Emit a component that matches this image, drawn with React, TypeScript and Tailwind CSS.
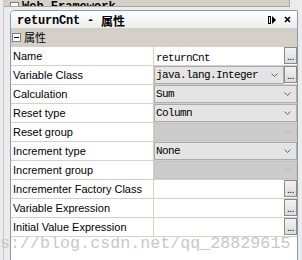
import React from 'react';

type Row = {
  label: string;
  kind: 'text' | 'combo' | 'disabled' | 'empty';
  value?: string;
  dots?: boolean;
};

const rows: Row[] = [
  { label: 'Name', kind: 'text', value: 'returnCnt', dots: true },
  { label: 'Variable Class', kind: 'combo', value: 'java.lang.Integer', dots: true },
  { label: 'Calculation', kind: 'combo', value: 'Sum' },
  { label: 'Reset type', kind: 'combo', value: 'Column' },
  { label: 'Reset group', kind: 'disabled' },
  { label: 'Increment type', kind: 'combo', value: 'None' },
  { label: 'Increment group', kind: 'disabled' },
  { label: 'Incrementer Factory Class', kind: 'empty', dots: true },
  { label: 'Variable Expression', kind: 'empty', dots: true },
  { label: 'Initial Value Expression', kind: 'empty', dots: true },
];

const Chevron = ({ light }: { light?: boolean }) => (
  <svg width="7" height="5" viewBox="0 0 7 5" className="shrink-0">
    <polyline points="0.5,0.5 3.5,3.5 6.5,0.5" fill="none" stroke={light ? '#b4b4b4' : '#606060'} strokeWidth="1" />
  </svg>
);

const DotsButton = () => (
  <div className="w-[13px] h-[17px] shrink-0 bg-gradient-to-b from-[#f2f2f2] to-[#dcdcdc] border border-[#8a8a8a] flex items-end justify-center leading-none">
    <span className="text-[10px] text-black font-['Liberation_Sans'] pb-[1px] tracking-[-0.5px]">...</span>
  </div>
);

const ValueCell = ({ row }: { row: Row }) => {
  const mono = "font-['Liberation_Mono',monospace] text-[11px] tracking-[-0.6px] text-black";
  if (row.kind === 'combo') {
    return (
      <div className="flex h-full">
        <div className="flex-1 h-full flex items-center justify-between bg-[#e4e4e4] border border-[#acacac] pl-[1px] pr-[5px]">
          <span className={mono}>{row.value}</span>
          <Chevron />
        </div>
        {row.dots && <DotsButton />}
      </div>
    );
  }
  if (row.kind === 'disabled') {
    return (
      <div className="h-full flex items-center justify-end bg-[#cccccc] border border-[#c4c4c4] pr-[5px]">
        <Chevron light />
      </div>
    );
  }
  return (
    <div className="h-full flex items-start justify-between">
      <span className={`${mono} pl-[2px] pt-[3px]`}>{row.value ?? ''}</span>
      {row.dots && <DotsButton />}
    </div>
  );
};

export default function App() {
  return (
    <div className="relative w-[302px] h-[260px] overflow-hidden bg-[#ececec] font-['Liberation_Sans',sans-serif]">
      <div className="flex h-full">
        <div className="w-[3px] shrink-0" />
        <div className="w-[1px] shrink-0 bg-[#c8c8c8]" />
        <div className="flex-1 flex flex-col">
          {/* remains of the view above */}
          <div className="h-[7px] w-[286px] bg-[#d4d0c8] border-b border-[#aca899] border-r overflow-hidden flex items-end pl-[6px] gap-[3px]">
            <div className="w-[9px] h-[9px] border border-[#808080] bg-white mb-[-5px] shrink-0" />
            <span className="text-[12px] font-bold font-['Liberation_Mono',monospace] leading-none mb-[-7px]">Web Framework</span>
          </div>
          <div className="h-[3px]" />

          <div className="ml-[6px] w-[288px] flex-1 border border-b-0 border-[#7f9db9] rounded-tl-[5px] rounded-tr-[2px] bg-white flex flex-col">
            {/* title bar */}
            <div className="h-[17px] flex items-center justify-between bg-gradient-to-b from-[#ffffff] to-[#ededed] rounded-tl-[4px] pl-[6px] pr-[6px]">
              <div className="flex items-center leading-none pt-[2px]">
                <span className="font-['Liberation_Mono',monospace] font-bold text-[12px] tracking-[-0.2px] whitespace-pre">returnCnt - </span>
                <span className="font-['Noto_Sans_CJK_SC',sans-serif] font-bold text-[12px]">属性</span>
              </div>
              <div className="flex items-center gap-[8px]">
                <svg width="8" height="8" viewBox="0 0 8 8">
                  <rect x="0.5" y="0.5" width="2" height="7" fill="none" stroke="#000" strokeWidth="1" />
                  <polygon points="4,0 8,4 4,8" fill="#000" />
                </svg>
                <svg width="7" height="7" viewBox="0 0 7 7">
                  <path d="M1 1 L6 6 M6 1 L1 6" stroke="#000" strokeWidth="1.6" />
                </svg>
              </div>
            </div>

            {/* category band */}
            <div className="h-[19px] bg-[#d4d0c8] flex items-center pl-[1px] gap-[3px]">
              <div className="w-[9px] h-[9px] border border-[#808080] bg-white flex items-center justify-center">
                <div className="w-[5px] h-[1px] bg-black" />
              </div>
              <span className="font-['Noto_Sans_CJK_SC',sans-serif] text-[11px] leading-none">属性</span>
            </div>

            {rows.map((row) => (
              <div key={row.label} className="flex h-[19px] border-b border-[#d4d0c8]">
                <div className="w-[143px] shrink-0 border-r border-[#d4d0c8] pl-[2px] flex items-center text-[11px] text-black whitespace-nowrap">
                  {row.label}
                </div>
                <div className="flex-1">
                  <ValueCell row={row} />
                </div>
              </div>
            ))}

            <div className="flex flex-1">
              <div className="w-[143px] shrink-0" />
              <div className="flex-1" />
            </div>
          </div>
        </div>
      </div>

      {/* watermark */}
      <div className="absolute left-0 top-[236px] font-['Liberation_Mono',monospace] text-[16.7px] text-[#c8c8c8] leading-none whitespace-nowrap pointer-events-none">
        s://blog.csdn.net/qq_28829615
      </div>
    </div>
  );
}
